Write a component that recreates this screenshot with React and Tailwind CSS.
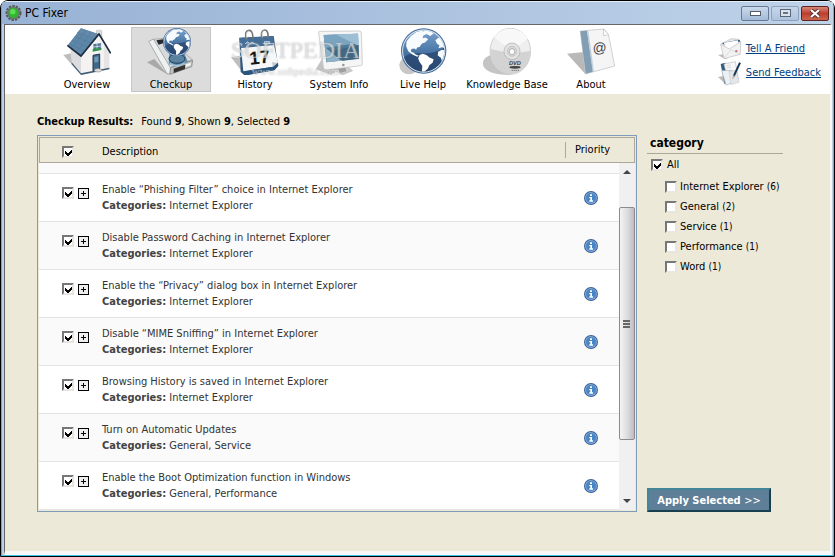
import { useState } from "react";

const results = [
  ["Enable “Phishing Filter” choice in Internet Explorer", "Internet Explorer"],
  ["Disable Password Caching in Internet Explorer", "Internet Explorer"],
  ["Enable the “Privacy” dialog box in Internet Explorer", "Internet Explorer"],
  ["Disable “MIME Sniffing” in Internet Explorer", "Internet Explorer"],
  ["Browsing History is saved in Internet Explorer", "Internet Explorer"],
  ["Turn on Automatic Updates", "General, Service"],
  ["Enable the Boot Optimization function in Windows", "General, Performance"],
];

const categories = [
  ["Internet Explorer", 6],
  ["General", 2],
  ["Service", 1],
  ["Performance", 1],
  ["Word", 1],
];

function HouseIcon() {
  return (
    <svg viewBox="189 81 144 141" className="h-[47px] w-12 shrink-0" aria-hidden="true">
      <path d="M190 162l24-5 4 38 24 26z" fill="#bdbdbd" />
      <path d="M290 88h15v30h-15z" fill="#efe9e4" stroke="#a9a39f" strokeWidth="2" />
      <path d="M288 87h18v6h-18z" fill="#d8d4d0" />
      <path d="M211 138l32 27v54l-28-33z" fill="#dcdcdf" />
      <path d="M296 100l32 54v48l-85 18v-56z" fill="#f5f3f2" />
      <path d="M312 130l16 24v48l-16 4z" fill="#e6e4e4" />
      <path d="M215 184l28 33 85-17v5l-85 17-28-32z" fill="#3f5b75" />
      <path d="M243 82l54 18-54 64-40-31z" fill="#5d86a8" />
      <path d="M243 82l54 18-14 16-53-19z" fill="#6589a8" />
      <path d="M234 95l53 20M225 107l52 21M216 118l49 21M208 128l45 22M258 88l-42 52M274 93l-43 59" stroke="#527c9c" strokeWidth="2" fill="none" />
      <path d="M202 133l41 32 54-66 35 58" fill="none" stroke="#1d2d40" strokeWidth="5" />
      <path d="M279 128l25-3v20l-25 4z" fill="#4d7795" stroke="#fff" strokeWidth="2" />
      <path d="M291 127v20M280 138l24-3" stroke="#eef4f8" strokeWidth="2" />
      <path d="M278 144l26-3v6l-26 5z" fill="#2d9448" />
      <path d="M279 163l20-4v46l-20 5z" fill="#3f6787" stroke="#24394e" strokeWidth="3" />
      <path d="M283 168l12-2v16l-12 3z" fill="#7299b6" />
      <ellipse cx="294" cy="208" rx="11" ry="5" fill="#e1dfdd" stroke="#949494" strokeWidth="2" />
    </svg>
  );
}

function Globe({ cx, cy, r, id }) {
  return (
    <g transform={`translate(${cx} ${cy}) scale(${r / 66})`}>
      <defs>
        <linearGradient id={id} x1="0" y1="0" x2="0" y2="1">
          <stop offset="0" stopColor="#7ba3cc" />
          <stop offset=".45" stopColor="#4f7cac" />
          <stop offset="1" stopColor="#2b4a75" />
        </linearGradient>
        <clipPath id={id + "c"}>
          <circle r="60" />
        </clipPath>
      </defs>
      <circle r="66" fill="#446b98" />
      <circle r="63" fill="#d5e3f0" />
      <circle r="60" fill={`url(#${id})`} />
      <g clipPath={`url(#${id}c)`}>
        <path d="M-60 22C-30-10 10 24 62-12V62H-60z" fill="#27456f" opacity=".75" />
        <path
          fill="#f8fbfd"
          d="M-50-28l12-15 17-12 14-4 12 3 3 7-9 4-2 8 9-2 7 5-9 9-9 3-7 10-7 2-3 6-5-3-9 1-1 8 8 3 6 5 9 4-5 3-14-7-12-9-6-15z"
        />
        <path fill="#f8fbfd" d="M2-62l17 3 10 8-10 7-9-5-9-5z" />
        <path
          fill="#fff"
          d="M-12 12l9-4 11 4 9 7 12 5-3 10-9 7-5 11-8 6-5 9-4-8 1-16-8-11-4-10z"
        />
        <path fill="#f8fbfd" d="M34-31l10-8 12 2 10 12v17l-13-3-10 3 3-9-7-4z" />
        <path fill="#f8fbfd" d="M42 2l11-6 12 2v22l-10 14-5-14-9-7z" />
      </g>
    </g>
  );
}

function CheckupIcon() {
  return (
    <svg viewBox="444 81 144 141" className="h-[47px] w-12 shrink-0" aria-hidden="true">
      <path d="M444 184l22-10 36 42 8 7z" fill="#a9a9a9" />
      <path d="M449 121l15-7 52 85-3 20-9-1z" fill="#eef0f1" stroke="#8d9194" strokeWidth="2" />
      <path d="M464 115l38-4 78 65-66 24z" fill="#d8dbdd" stroke="#999" strokeWidth="2" />
      <path d="M472 118l20-3v12l-13 4z" fill="#252a31" />
      <path d="M514 200l67-22-3 19-65 23z" fill="#bfc1c2" stroke="#75787a" strokeWidth="2" />
      <path d="M524 203l34-12v13l-34 12z" fill="#35312f" />
      <path d="M561 190l15-5-1 8-14 5z" fill="#f3f3f3" />
      <path d="M511 155h44l12 27-22 13-36-5z" fill="#608fb1" />
      <ellipse cx="534" cy="173" rx="24" ry="14" fill="#5a83a2" stroke="#213e56" strokeWidth="3" />
      <path d="M512 187c12 9 31 10 45-2" fill="none" stroke="#a3c3da" strokeWidth="4" />
      <Globe cx={534} cy={123} r={42} id="globeSmall" />
    </svg>
  );
}

function HistoryIcon() {
  return (
    <svg viewBox="48 21 144 141" className="h-[47px] w-12 shrink-0" aria-hidden="true">
      <path d="M48 109l30-4 9 54z" fill="#bebebe" />
      <path d="M73 50l103-5 13 88-10 14-90 16-12-10z" fill="#33587d" />
      <path d="M73 51l101-6 3 27-101 9z" fill="#456f99" />
      <path d="M78 81l99-9 12 53-15 12-89 14z" fill="#f5f7f8" />
      <path d="M189 125l-18-1 3 14z" fill="#c1cbd4" />
      <path d="M83 152l92-15 14-12 1 10-12 13-90 16z" fill="#2a557f" />
      <path d="M90 69l8-7 6 6 7-5 8 5M148 62h16v7h-16z" stroke="#c3d1de" strokeWidth="3" fill="#83a2bf" />
      <path d="M95 57c-7-21 0-30 8-29 9 1 11 15 10 25M142 55c-6-20 0-28 7-28 9 0 11 12 10 24" fill="none" stroke="#777" strokeWidth="5" />
      <path d="M96 51c-4-15 1-21 6-20M143 48c-4-14 1-19 5-18" fill="none" stroke="#ececec" strokeWidth="2" />
      <text x="105" y="131" fill="#151515" fontFamily="Liberation Sans, sans-serif" fontWeight="700" fontSize="55" transform="rotate(-6 105 131)">17</text>
    </svg>
  );
}

function MonitorIcon() {
  return (
    <svg viewBox="300 21 144 141" className="h-[47px] w-12 shrink-0" aria-hidden="true">
      <path d="M302 145l21-35 40 42-16 9z" fill="#c4c4c4" />
      <path d="M355 144l43-7 15 12-31 13z" fill="#ccc" stroke="#999" strokeWidth="1" />
      <path d="M366 139h24l4 12-18 4z" fill="#9e9e9e" />
      <path d="M314 31q-4 0-3 5l14 103q1 8 8 8l104-13q6-1 5-7l-3-91q0-6-6-6z" fill="#f5f5f5" stroke="#bbb" strokeWidth="2" />
      <path d="M326 42l103-4 2 75-97 11z" fill="#4d7995" />
      <path d="M326 42l103-4 1 28-100 15z" fill="#7ba4c0" />
      <path d="M362 40l67-2 2 37z" fill="#9cbfd5" />
      <path d="M330 79l49 40-44 5z" fill="#8eb2c7" />
      <path d="M345 91l86-19 1 41-49 6z" fill="#3f6884" />
      <circle cx="385" cy="132" r="4" fill="#999" />
    </svg>
  );
}

function HelpIcon() {
  return (
    <svg viewBox="57 21 144 141" className="h-[47px] w-12 shrink-0" aria-hidden="true">
      <ellipse cx="87" cy="133" rx="29" ry="27" fill="#c7c7c7" />
      <Globe cx={131} cy={90} r={68} id="globeLarge" />
    </svg>
  );
}

function DiscIcon() {
  return (
    <svg viewBox="309 21 144 141" className="h-[47px] w-12 shrink-0" aria-hidden="true">
      <path d="M338 101c-30 5-38 30-19 45 17 13 48 16 75 15z" fill="#c4c4c4" />
      <ellipse cx="391" cy="91" rx="61" ry="69" fill="#eee" stroke="#bcbcbc" strokeWidth="2" />
      <path d="M331 84l63 14 57-8c2 36-23 67-57 70-35 0-64-30-63-76z" fill="#d3d3d3" />
      <path d="M342 49c23-36 82-34 101 4l-41 33-21-8z" fill="#f8f8f8" />
      <ellipse cx="396" cy="91" rx="24" ry="25" fill="#e3e3e3" stroke="#aaa" strokeWidth="2" />
      <ellipse cx="396" cy="91" rx="14" ry="15" fill="#d6d6d6" stroke="#bbb" strokeWidth="2" />
      <ellipse cx="396" cy="92" rx="8" ry="9" fill="#fff" stroke="#999" strokeWidth="2" />
      <text x="387" y="133" fill="#3c3c3c" fontFamily="Liberation Sans, sans-serif" fontStyle="italic" fontWeight="700" fontSize="17">DVD</text>
      <ellipse cx="405" cy="139" rx="17" ry="4" fill="#444" />
      <path d="M395 148h24" stroke="#777" strokeWidth="3" strokeDasharray="4 2" />
    </svg>
  );
}

function AboutIcon() {
  return (
    <svg viewBox="561 21 144 141" className="h-[47px] w-12 shrink-0" aria-hidden="true">
      <path d="M561 98l50-5 5 66z" fill="#b9b9b9" />
      <path d="M601 30l71-6 14 19 18 92-88 24z" fill="#f5f5f5" stroke="#bcbcbc" strokeWidth="2" />
      <path d="M601 31l20-2 18 123-22 6z" fill="#829eb5" />
      <path d="M621 29l4 0 17 122-4 1z" fill="#c1d0db" />
      <path d="M671 24l-1 20 16-3z" fill="#fff" stroke="#bbb" strokeWidth="2" />
      <text x="639" y="97" fill="#444" fontFamily="Liberation Sans, sans-serif" fontSize="42" transform="rotate(-6 639 97)">@</text>
    </svg>
  );
}

function MailIcon() {
  return (
    <svg viewBox="122 112 72 66" className="h-[22px] w-6" aria-hidden="true">
      <path d="M122 163l20-3 8 14-7 1z" fill="#bbb" />
      <path d="M131 130l31-16 22 2 6 11-8 15-45 10z" fill="#e7eaed" stroke="#b6b6b6" strokeWidth="2" />
      <path d="M134 127l52-10 3 5-40 18z" fill="#2d5576" />
      <path d="M139 126l43-7 2 14-36 16z" fill="#fff" />
      <path d="M130 131l26 14 34-22-1 38-49 13z" fill="#f2f2f2" stroke="#bcbcbc" strokeWidth="2" />
      <path d="M139 173l22-26 27 14" fill="none" stroke="#d0d0d0" strokeWidth="2" />
      <path d="M174 149l6-1v6l-6 1z" fill="#c46c72" />
    </svg>
  );
}

function NotesIcon() {
  return (
    <svg viewBox="122 178 72 75" className="h-[25px] w-6" aria-hidden="true">
      <path d="M122 226l15-3 8 25z" fill="#bbb" />
      <path d="M130 187l14-4 13 57-15 8z" fill="#345f83" />
      <path d="M140 187l34-7 9 53-29 10z" fill="#f8f8f8" stroke="#bbb" strokeWidth="2" />
      <path d="M133 207l31-1 14 33-32 11z" fill="#eef1f3" stroke="#abb4bb" strokeWidth="2" />
      <path d="M155 209l23-3 7 36-24 7z" fill="#e2e7eb" stroke="#a2adb5" strokeWidth="1" />
      <path d="M147 192l13-2M149 198l12-2" stroke="#c6c6c6" strokeWidth="2" />
      <path d="M188 183l-19 41" stroke="#173652" strokeWidth="6" />
      <path d="M170 221l-4 10" stroke="#d6a883" strokeWidth="4" />
    </svg>
  );
}

function GearIcon() {
  return (
    <svg viewBox="14 14 50 48" className="h-4 w-[17px]" aria-hidden="true">
      <circle cx="39" cy="38" r="20" fill="none" stroke="#555b55" strokeWidth="8" strokeDasharray="7 3" />
      <circle cx="39" cy="38" r="19" fill="#6d746d" />
      <circle cx="39" cy="38" r="15" fill="#2eb82e" />
      <circle cx="37" cy="34" r="8" fill="#5cdf54" />
    </svg>
  );
}

function InfoIcon() {
  return (
    <svg viewBox="0 0 42 42" className="size-[14px]" role="img" aria-label="Information">
      <circle cx="21" cy="21" r="21" fill="#3d6196" />
      <circle cx="21" cy="21" r="18" fill="#7fa9d6" />
      <circle cx="21" cy="21" r="15" fill="#4b86c4" />
      <path d="M18 10h6v5h-6zM16 18h8v10h3v4H16v-4h3v-6h-3z" fill="#fff" />
    </svg>
  );
}

function Tick({ id, label, checked, onChange }) {
  return (
    <span className="inline-grid size-3 shrink-0 align-top">
      <input
        id={id}
        type="checkbox"
        aria-label={label}
        checked={checked}
        onChange={onChange}
        className="col-start-1 row-start-1 size-3 appearance-none border-2 border-t-[#777] border-r-[#e8e6df] border-b-[#e8e6df] border-l-[#777] bg-white"
      />
      {checked && (
        <svg viewBox="0 0 12 12" className="pointer-events-none col-start-1 row-start-1 size-3" aria-hidden="true" shapeRendering="crispEdges">
          <path d="M3 5v3l2 2h1l4-4V3L6 7H5L3 5z" fill="#000" />
        </svg>
      )}
    </span>
  );
}

const tools = [
  ["Overview", HouseIcon],
  ["Checkup", CheckupIcon],
  ["History", HistoryIcon],
  ["System Info", MonitorIcon],
  ["Live Help", HelpIcon],
  ["Knowledge Base", DiscIcon],
  ["About", AboutIcon],
];

function TitleBar() {
  const base = "grid h-[15px] place-items-center rounded-xs border";
  return (
    <header className="flex h-[22px] items-center bg-linear-to-r from-[#98b2d5] to-[#bfd3e9] pr-1 pl-[3px]">
      <GearIcon />
      <h1 className="ml-[3px] flex-1 text-[12px]">PC Fixer</h1>
      <div className="flex gap-[2px]">
        <button type="button" aria-label="Minimize" className={`${base} w-7 border-[#667a96] bg-linear-to-b from-[#cad9eb] to-[#a3bbd7]`}>
          <span className="h-[5px] w-[11px] border border-[#555d69] bg-white" />
        </button>
        <button type="button" aria-label="Maximize" className={`${base} w-7 border-[#8da1bb] bg-linear-to-b from-[#c7d7ea] to-[#adc3de]`}>
          <span className="grid h-2 w-[11px] place-items-center border border-[#5b6675] bg-[#d9e2ed]">
            <span className="h-[2px] w-[5px] bg-[#66758a]" />
          </span>
        </button>
        <button type="button" aria-label="Close" className={`${base} w-7 border-[#60231f] bg-linear-to-b from-[#d78779] via-[#bd3c2d] to-[#c8664f]`}>
          <svg viewBox="0 0 12 9" className="h-[9px] w-3" aria-hidden="true">
            <path d="M2 1l8 7M10 1L2 8" stroke="#533" strokeWidth="4" />
            <path d="M2 1l8 7M10 1L2 8" stroke="#fff" strokeWidth="2" />
          </svg>
        </button>
      </div>
    </header>
  );
}

function Toolbar() {
  return (
    <div className="relative flex h-[69px] justify-between bg-white pr-[9px] pl-[42px]">
      <nav className="flex gap-1 pt-[2px]">
        {tools.map(([name, Icon]) => (
          <button
            key={name}
            type="button"
            className={`flex h-[65px] w-20 flex-col items-center whitespace-nowrap border ${
              name === "Checkup" ? "border-[#c6c6c6] bg-[#dcdcdc]" : "border-transparent"
            }`}
          >
            <Icon />
            <span className="mt-1 leading-3">{name}</span>
          </button>
        ))}
      </nav>
      <div className="flex flex-col pt-3 text-[#003e7e]">
        <a href="#friend" className="flex h-6 items-center gap-1 underline">
          <MailIcon />
          Tell A Friend
        </a>
        <a href="#feedback" className="flex h-6 items-center gap-1 underline">
          <NotesIcon />
          Send Feedback
        </a>
      </div>
      <div className="pointer-events-none absolute top-[11px] left-[226px] flex flex-col items-center font-['Liberation_Serif',serif] text-white/50 [text-shadow:0_0_2px_#888a]">
        <span className="text-[24px] leading-7">SOFTPEDIA</span>
        <span className="text-[11px] leading-[14px]">www.softpedia.com</span>
      </div>
    </div>
  );
}

function ScrollBar() {
  return (
    <div className="flex flex-col bg-[#f0f0f0]">
      <button type="button" aria-label="Scroll up" className="grid h-[44px] justify-center pt-[7px]">
        <svg viewBox="0 0 8 4" className="h-1 w-2"><path d="M0 4L4 0 8 4z" fill="#444" /></svg>
      </button>
      <div className="flex h-[233px] flex-col items-center justify-center gap-px rounded-xs border border-[#8b8b8f] bg-linear-to-r from-[#f4f4f4] via-[#dedee0] to-[#bcbcc2]">
        <span className="h-[2px] w-[7px] bg-[#666]" />
        <span className="h-[2px] w-[7px] bg-[#666]" />
        <span className="h-[2px] w-[7px] bg-[#666]" />
      </div>
      <button type="button" aria-label="Scroll down" className="grid h-[70px] items-end justify-center pb-[7px]">
        <svg viewBox="0 0 8 4" className="h-1 w-2"><path d="M0 0L4 4 8 0z" fill="#444" /></svg>
      </button>
    </div>
  );
}

export default function App() {
  const [rows, setRows] = useState(results.map(() => true));
  const [cats, setCats] = useState(categories.map(() => false));
  const [all, setAll] = useState(true);
  const allRows = rows.every(Boolean);
  const flip = (list, i) => list.map((v, n) => (n === i ? !v : v));

  return (
    <div className="flex min-h-screen flex-col rounded-t-lg border border-black bg-[#b9d0ea] font-['DejaVu_Sans_Condensed','DejaVu_Sans',sans-serif] text-[11px] leading-4 text-black">
      <div className="flex flex-1 flex-col rounded-t-md border border-t-[#e5eef8] border-r-[#35c4e4] border-b-[#35c4e4] border-l-[#6fa5c9]">
        <TitleBar />
        <div className="mr-px ml-[2px] flex flex-1 flex-col border-t border-r-2 border-b-4 border-l border-t-[#666] border-r-[#f8f8f8] border-b-[#f8f8f8] border-l-[#666] bg-[#ece9d8]">
          <Toolbar />
          <main className="flex flex-1 flex-col pt-5 pl-8">
            <h2 className="flex h-[21px]">
              <b className="mr-2">Checkup Results:</b>
              <span>Found <b>9</b>, Shown <b>9</b>, Selected <b>9</b></span>
            </h2>
            <div className="flex gap-[10px]">
              <div className="flex-1 border border-[#7f9db9] p-px">
                <table className="w-full table-fixed border-separate border-spacing-0 text-left text-[#333]">
                  <colgroup>
                    <col className="w-[63px]" />
                    <col />
                    <col className="w-[54px]" />
                    <col className="w-4" />
                  </colgroup>
                  <thead className="text-black">
                    <tr className="h-[26px]">
                      <th className="border border-r-0 border-[#aca899] pt-1 pl-[22px] align-middle font-normal">
                        <span className="flex">
                          <Tick label="Select all results" checked={allRows} onChange={() => setRows(rows.map(() => !allRows))} />
                        </span>
                      </th>
                      <th className="border-y border-[#aca899] pt-1 font-normal">Description</th>
                      <th colSpan={2} className="border border-l-0 border-[#aca899] font-normal">
                        <span className="block border-l border-[#aca899] pl-[9px]">Priority</span>
                      </th>
                    </tr>
                  </thead>
                  <tbody>
                    <tr className="h-[11px] bg-[#fafafa]">
                      <td colSpan={3} className="border-b border-[#e4e4e4]" />
                      <td rowSpan={8} className="p-0 align-top"><ScrollBar /></td>
                    </tr>
                    {results.map(([title, where], i) => (
                      <tr key={title} className="h-12 odd:bg-[#fafafa] even:bg-white">
                        <td className="border-b border-[#e4e4e4] pt-[13px] pl-[23px] align-top">
                          <span className="flex items-center gap-1">
                            <Tick label={title} checked={rows[i]} onChange={() => setRows(flip(rows, i))} />
                            <button type="button" aria-label={`Expand ${title}`} className="grid size-[11px] place-items-center border border-black bg-[#eee]">
                              <svg viewBox="0 0 5 5" className="size-[5px]"><path d="M2 0h1v2h2v1H3v2H2V3H0V2h2z" /></svg>
                            </button>
                          </span>
                        </td>
                        <td className="border-b border-[#e4e4e4] pt-2 align-top">
                          <p>{title}</p>
                          <p><b className="text-[#444]">Categories:</b> {where}</p>
                        </td>
                        <td className="border-b border-[#e4e4e4] pl-[19px]"><InfoIcon /></td>
                      </tr>
                    ))}
                  </tbody>
                </table>
              </div>
              <aside className="flex w-[183px] flex-col">
                <h3 className="mr-[47px] h-[19px] border-b border-[#aca899] pl-[3px] text-[12px] font-bold leading-4">category</h3>
                <label className="mt-[3px] flex h-4 items-center gap-1 pl-1">
                  <Tick checked={all} onChange={() => setAll(!all)} />
                  All
                </label>
                <div className="mt-1 pl-[18px]">
                  {categories.map(([name, count], i) => (
                    <label key={name} className="flex h-5 items-center gap-[3px]">
                      <Tick checked={cats[i]} onChange={() => setCats(flip(cats, i))} />
                      <span>{name} <span className="text-[10px]">({count})</span></span>
                    </label>
                  ))}
                </div>
                <button type="button" className="mt-auto h-6 w-[124px] border-2 border-t-[#438699] border-r-[#173f4e] border-b-[#173f4e] border-l-[#438699] bg-[#5f7f98] pt-px font-bold text-white">
                  Apply Selected <span className="font-normal">&gt;&gt;</span>
                </button>
              </aside>
            </div>
          </main>
        </div>
      </div>
    </div>
  );
}
